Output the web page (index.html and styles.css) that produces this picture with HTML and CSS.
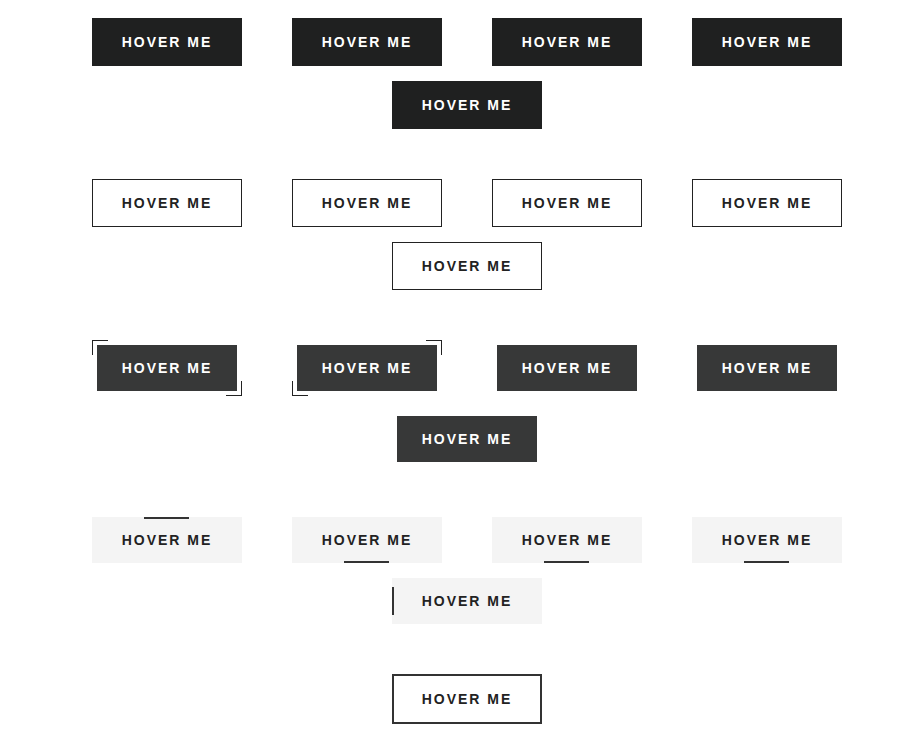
FILE: index.html
```html
<!DOCTYPE html>
<html>
<head>
<meta charset="utf-8">
<link rel="stylesheet" href="styles.css">
</head>
<body>
<main class="page">
  <section class="group">
    <button class="btn btn-solid">HOVER ME</button>
    <button class="btn btn-solid">HOVER ME</button>
    <button class="btn btn-solid">HOVER ME</button>
    <button class="btn btn-solid">HOVER ME</button>
    <button class="btn btn-solid">HOVER ME</button>
  </section>
  <section class="group">
    <button class="btn btn-outline">HOVER ME</button>
    <button class="btn btn-outline">HOVER ME</button>
    <button class="btn btn-outline">HOVER ME</button>
    <button class="btn btn-outline">HOVER ME</button>
    <button class="btn btn-outline">HOVER ME</button>
  </section>
  <section class="group">
    <div class="frame corners-a"><span class="corner tl"></span><span class="corner br"></span><button class="btn btn-box">HOVER ME</button></div>
    <div class="frame corners-b"><span class="corner tr"></span><span class="corner bl"></span><button class="btn btn-box">HOVER ME</button></div>
    <div class="frame"><button class="btn btn-box">HOVER ME</button></div>
    <div class="frame"><button class="btn btn-box">HOVER ME</button></div>
    <div class="frame"><button class="btn btn-box">HOVER ME</button></div>
  </section>
  <section class="group">
    <button class="btn btn-light line-top">HOVER ME</button>
    <button class="btn btn-light line-bottom">HOVER ME</button>
    <button class="btn btn-light line-bottom">HOVER ME</button>
    <button class="btn btn-light line-bottom">HOVER ME</button>
    <button class="btn btn-light line-left">HOVER ME</button>
  </section>
  <section class="group">
    <button class="btn btn-thick">HOVER ME</button>
  </section>
</main>
</body>
</html>
```

FILE: styles.css
```css
* { box-sizing: border-box; }

html, body {
  margin: 0;
  padding: 0;
  background: #ffffff;
}

.page {
  padding: 18px 0 0 25px;
  font-family: "Liberation Sans", Arial, sans-serif;
}

.group {
  display: flex;
  flex-wrap: wrap;
  justify-content: center;
  row-gap: 15px;
  margin-bottom: 50px;
}

.btn {
  position: relative;
  width: 150px;
  height: 48px;
  margin: 0 25px;
  padding: 0;
  border: none;
  font-family: "Liberation Sans", Arial, sans-serif;
  font-size: 14px;
  font-weight: bold;
  letter-spacing: 2px;
  line-height: 1;
  cursor: pointer;
  display: flex;
  align-items: center;
  justify-content: center;
}

.btn-solid {
  background: #1f2020;
  color: #ffffff;
}

.btn-outline {
  background: #ffffff;
  color: #222222;
  border: 1px solid #222222;
}

.frame {
  position: relative;
  width: 150px;
  height: 56px;
  margin: 0 25px;
  padding: 5px;
}

.btn-box {
  margin: 0;
  width: 140px;
  height: 46px;
  background: #373838;
  color: #ffffff;
}

.corner {
  position: absolute;
  width: 16px;
  height: 15px;
  border-color: #222222;
  border-style: solid;
  border-width: 0;
}
.corner.tl { top: 0; left: 0; border-top-width: 1px; border-left-width: 1px; }
.corner.br { bottom: 0; right: 0; border-bottom-width: 1px; border-right-width: 1px; }
.corner.tr { top: 0; right: 0; border-top-width: 1px; border-right-width: 1px; }
.corner.bl { bottom: 0; left: 0; border-bottom-width: 1px; border-left-width: 1px; }

.btn-light {
  height: 46px;
  background: #f4f4f4;
  color: #222222;
}

.line-top::before,
.line-bottom::before {
  content: "";
  position: absolute;
  left: 52px;
  width: 45px;
  height: 2px;
  background: #333333;
}
.line-top::before { top: 0; }
.line-bottom::before { bottom: 0; }

.line-left::before {
  content: "";
  position: absolute;
  left: 0;
  top: 9px;
  width: 2px;
  height: 28px;
  background: #333333;
}

.btn-thick {
  height: 50px;
  background: #ffffff;
  color: #222222;
  border: 2px solid #333333;
}
```
